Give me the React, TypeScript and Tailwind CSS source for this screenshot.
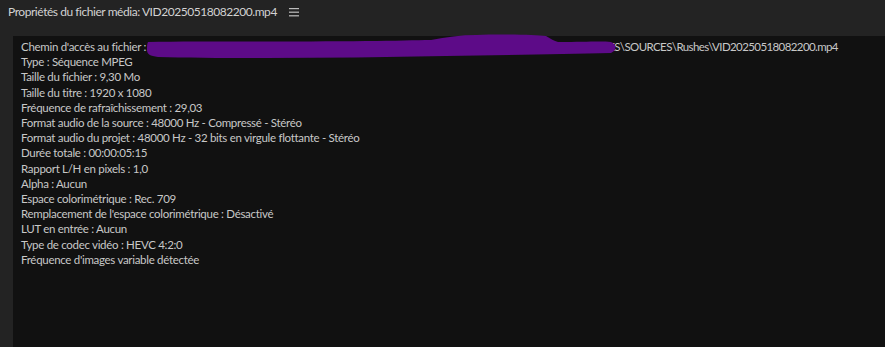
import React from 'react';

const lines: string[] = [
  'Type : Séquence MPEG',
  'Taille du fichier : 9,30 Mo',
  'Taille du titre : 1920 x 1080',
  'Fréquence de rafraîchissement : 29,03',
  'Format audio de la source : 48000 Hz - Compressé - Stéréo',
  'Format audio du projet : 48000 Hz - 32 bits en virgule flottante - Stéréo',
  'Durée totale : 00:00:05:15',
  'Rapport L/H en pixels : 1,0',
  'Alpha : Aucun',
  'Espace colorimétrique : Rec. 709',
  "Remplacement de l'espace colorimétrique : Désactivé",
  'LUT en entrée : Aucun',
  'Type de codec vidéo : HEVC 4:2:0',
  "Fréquence d'images variable détectée",
];

const App: React.FC = () => {
  return (
    <div
      className="w-[885px] h-[347px] bg-[#232323] flex flex-col overflow-hidden text-[#c8c8c8]"
      style={{ fontFamily: 'Lato, "Noto Sans", sans-serif' }}
    >
      {/* Header */}
      <div className="h-[36px] flex items-start pt-[3px] pl-[8px] gap-[12px]">
        <span className="text-[12px] leading-[18px] tracking-[-0.45px] text-[#d2d2d2]">
          Propriétés du fichier média: VID20250518082200.mp4
        </span>
        <svg width="10" height="9" viewBox="0 0 10 9" className="mt-[5px]">
          <rect x="0" y="0" width="10" height="1.2" fill="#bdbdbd" />
          <rect x="0" y="3.6" width="10" height="1.2" fill="#bdbdbd" />
          <rect x="0" y="7.2" width="10" height="1.2" fill="#bdbdbd" />
        </svg>
      </div>

      {/* Panel */}
      <div className="flex-1 ml-[13px] bg-[#111111] pt-[3px] pl-[8px] text-[11.5px] leading-[15.2px] tracking-[-0.3px] relative">
        <div className="flex whitespace-nowrap">
          <span>Chemin d'accès au fichier :</span>
          <span className="w-[462px] shrink-0 text-[#555]"> ............................</span>
          <span className="tracking-[-0.6px]">ES\SOURCES\Rushes\VID20250518082200.mp4</span>
        </div>
        {lines.map((l) => (
          <div key={l} className="whitespace-nowrap">
            {l}
          </div>
        ))}

        {/* purple redaction scribble */}
        <svg
          className="absolute left-[133px] top-[-2px]"
          width="480"
          height="28"
          viewBox="0 0 480 28"
        >
          <path
            d="M2 8 C60 7 150 8 220 7 C250 7 270 6 285 6 C300 3 315 1 330 1 C360 0 390 1 400 2 C405 5 408 7 412 8 C440 8 455 7 465 8 C471 10 471 16 465 19 C420 20 360 21 300 22 C240 23 180 24 120 24 C80 24 40 24 12 23 C4 22 1 20 1 16 C1 12 1 10 2 8 Z"
            fill="#5d0b88"
          />
        </svg>
      </div>
    </div>
  );
};

export default App;
